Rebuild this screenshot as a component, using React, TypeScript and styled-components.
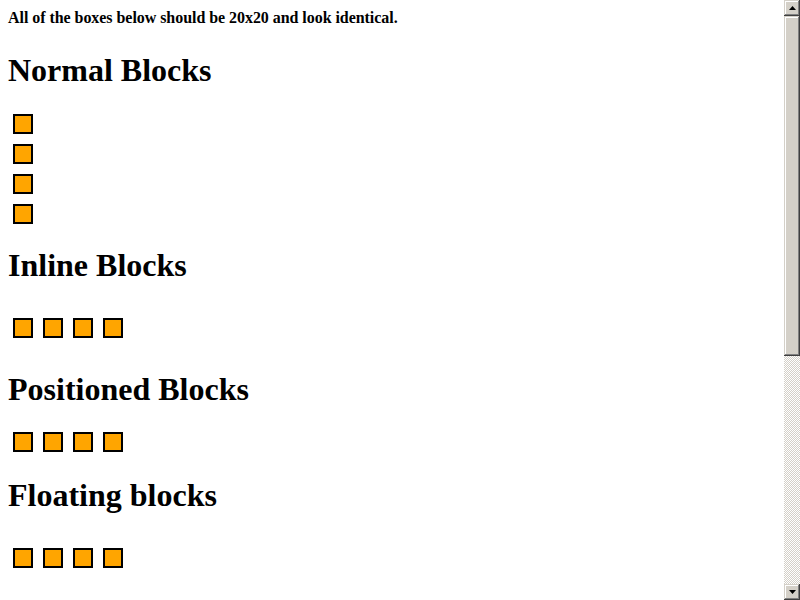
import React from "react";
import styled, { createGlobalStyle } from "styled-components";

const Global = createGlobalStyle`
  html, body { margin: 0; padding: 0; background: #fff; overflow: hidden; }
  body { font-family: "Liberation Serif", "Times New Roman", serif; color: #000; }
`;

const Page = styled.div`
  display: flex;
  width: 800px;
  height: 600px;
  overflow: hidden;
`;

const Content = styled.div`
  flex: 1;
  padding: 8px;
  overflow: hidden;
`;

const Intro = styled.p`
  margin: 0;
  font-size: 16px;
  line-height: 20px;
  font-weight: bold;
  letter-spacing: -0.05px;
`;

const Heading = styled.h1<{ $top: number }>`
  margin: ${(p) => p.$top}px 0 0 0;
  font-size: 32px;
  line-height: 36px;
  font-weight: bold;
`;

const Column = styled.div<{ $top: number }>`
  display: flex;
  flex-direction: column;
  gap: 10px;
  margin-top: ${(p) => p.$top}px;
  padding-left: 5px;
`;

const Row = styled.div<{ $top: number }>`
  display: flex;
  gap: 10px;
  margin-top: ${(p) => p.$top}px;
  padding-left: 5px;
`;

const Box = styled.div`
  box-sizing: border-box;
  width: 20px;
  height: 20px;
  border: 2px solid #000;
  background: #ffa500;
  flex: none;
`;

const ScrollBar = styled.div`
  width: 16px;
  display: flex;
  flex-direction: column;
  flex: none;
`;

const bevel = `
  background: #d4d0c8;
  box-shadow: inset -1px -1px #404040, inset 1px 1px #d4d0c8,
    inset -2px -2px #808080, inset 2px 2px #ffffff;
`;

const ArrowButton = styled.div`
  height: 16px;
  box-sizing: border-box;
  display: flex;
  align-items: center;
  justify-content: center;
  ${bevel}
`;

const Track = styled.div`
  flex: 1;
  display: flex;
  flex-direction: column;
  background-color: #ffffff;
  background-image: conic-gradient(#d4d0c8 25%, #ffffff 0 50%, #d4d0c8 0 75%, #ffffff 0);
  background-size: 2px 2px;
`;

const Thumb = styled.div<{ $size: number }>`
  height: ${(p) => p.$size}px;
  ${bevel}
`;

const Arrow = ({ down }: { down?: boolean }) => (
  <svg width="7" height="4" viewBox="0 0 7 4" style={{ display: "block" }}>
    {down ? (
      <polygon points="0,0 7,0 3.5,4" fill="#000" />
    ) : (
      <polygon points="3.5,0 7,4 0,4" fill="#000" />
    )}
  </svg>
);

const four = [0, 1, 2, 3];

export default function App() {
  return (
    <>
      <Global />
      <Page>
        <Content>
          <Intro>All of the boxes below should be 20x20 and look identical.</Intro>
          <Heading $top={24}>Normal Blocks</Heading>
          <Column $top={26}>
            {four.map((i) => (
              <Box key={i} />
            ))}
          </Column>
          <Heading $top={23}>Inline Blocks</Heading>
          <Row $top={35}>
            {four.map((i) => (
              <Box key={i} />
            ))}
          </Row>
          <Heading $top={33}>Positioned Blocks</Heading>
          <Row $top={25}>
            {four.map((i) => (
              <Box key={i} />
            ))}
          </Row>
          <Heading $top={25}>Floating blocks</Heading>
          <Row $top={35}>
            {four.map((i) => (
              <Box key={i} />
            ))}
          </Row>
        </Content>
        <ScrollBar>
          <ArrowButton>
            <Arrow />
          </ArrowButton>
          <Track>
            <Thumb $size={340} />
          </Track>
          <ArrowButton>
            <Arrow down />
          </ArrowButton>
        </ScrollBar>
      </Page>
    </>
  );
}
